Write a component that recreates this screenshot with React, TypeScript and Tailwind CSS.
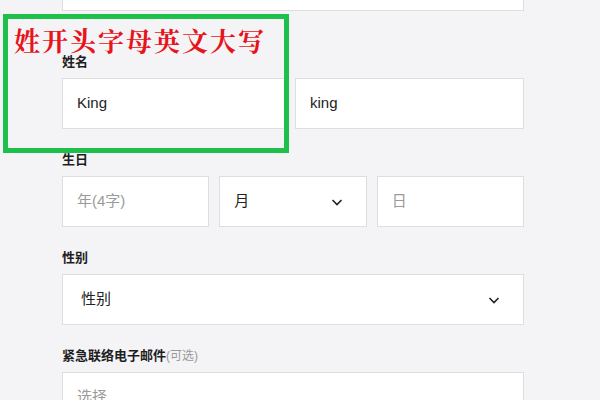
const font = "font-['Liberation_Sans','Noto_Sans_CJK_SC',sans-serif]";

function Chevron() {
  return (
    <svg width="14" height="14" viewBox="0 0 14 14" fill="none">
      <path d="M2.5 5l4.5 4.5L11.5 5" stroke="#222" strokeWidth="1.6" />
    </svg>
  );
}

function Label({ children }: { children: React.ReactNode }) {
  return (
    <div className="h-5 mb-[6px] text-[13px] leading-5 font-bold text-[#1e1e1e]">
      {children}
    </div>
  );
}

function Box({
  text,
  placeholder,
  select,
  className = "",
}: {
  text: string;
  placeholder?: boolean;
  select?: boolean;
  className?: string;
}) {
  return (
    <div
      className={`flex items-center justify-between h-[51px] bg-white border border-[#dedede] pl-[14px] pr-[22px] text-[15px] ${
        placeholder ? "text-[#9a9a9a]" : "text-[#222]"
      } ${className}`}
    >
      <span>{text}</span>
      {select && <Chevron />}
    </div>
  );
}

export default function App() {
  return (
    <div className={`relative w-[600px] h-[400px] overflow-hidden bg-[#f4f4f6] ${font}`}>
      <div className="ml-[62px] w-[462px] flex flex-col">
        <div className="h-[51px] -mt-[40px] bg-white border border-[#dedede]" />
        <div className="mt-[41px]">
          <Label>姓名</Label>
          <div className="flex gap-[7px]">
            <Box text="King" className="w-[226px]" />
            <Box text="king" className="flex-1" />
          </div>
        </div>
        <div className="mt-[21px]">
          <Label>生日</Label>
          <div className="grid grid-cols-3 gap-[10px]">
            <Box text="年(4字)" placeholder />
            <Box text="月" select />
            <Box text="日" placeholder />
          </div>
        </div>
        <div className="mt-[21px]">
          <Label>性别</Label>
          <Box text="性别" select className="pl-[18px]" />
        </div>
        <div className="mt-[21px]">
          <Label>
            紧急联络电子邮件
            <span className="font-normal text-[#999] text-[12px]">(可选)</span>
          </Label>
          <Box text="选择" placeholder />
        </div>
      </div>
      <div className="absolute left-[3px] top-[14px] w-[286px] h-[139px] border-[5px] border-[#1ec04c]">
        <div className="mt-[8px] ml-[6px] text-[26px] leading-[26px] tracking-[2px] font-bold text-[#e8141c] font-['Noto_Serif_CJK_SC','Noto_Sans_CJK_SC',serif]">
          姓开头字母英文大写
        </div>
      </div>
    </div>
  );
}
